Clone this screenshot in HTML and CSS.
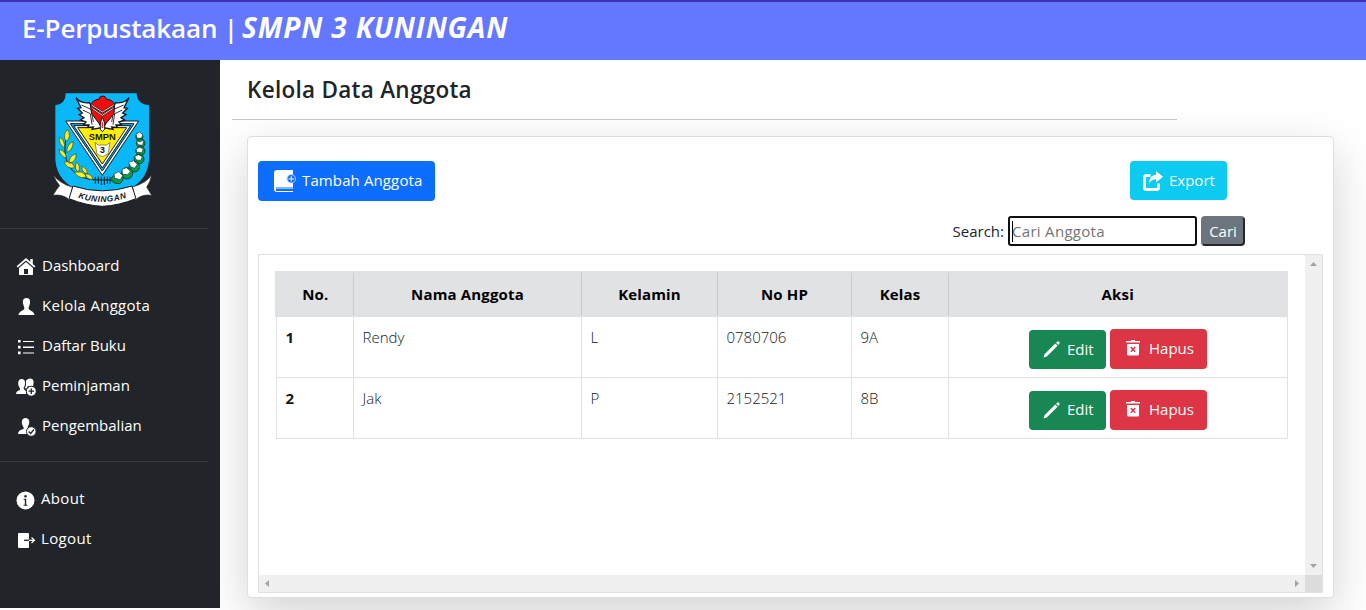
FILE: index.html
```html
<!DOCTYPE html>
<html lang="id">
<head>
<meta charset="utf-8">
<title>E-Perpustakaan</title>
<link rel="stylesheet" href="styles.css">
</head>
<body>
<header class="topbar"><span class="brand">E-Perpustakaan |</span><span class="school">SMPN 3 KUNINGAN</span></header>
<div class="layout">
  <aside class="sidebar">
    <svg class="logo" viewBox="0 0 375 405">
      <path d="M77 40H290Q290 72 327 76V240Q320 315 245 333Q185 350 125 333Q52 310 46 240V76Q78 72 77 40Z" fill="#08b8f8"/>
      <path d="M77 123H296L187 286Z" fill="#fff" stroke="#15151d" stroke-width="3"/>
      <path d="M91 131H282L187 273Z" fill="#08b8f8" stroke="#15151d" stroke-width="3"/>
      <path d="M101 137H272L187 264Z" fill="#fff" stroke="#15151d" stroke-width="3"/>
      <path d="M113 143H260L187 252Z" fill="#fff000" stroke="#15151d" stroke-width="3"/>
      <path d="M108 53Q119 71 148 68L163 93L184 143L156 148L160 141L143 142L147 135L130 135L138 126L121 120L132 113L117 104L127 99L113 85L123 83Z" fill="#fff" stroke="#15151d" stroke-width="4"/>
      <path d="M267 53Q256 71 227 68L212 93L191 143L219 148L215 141L232 142L228 135L245 135L237 126L254 120L243 113L258 104L248 99L262 85L252 83Z" fill="#fff" stroke="#15151d" stroke-width="4"/>
      <path d="M124 75L153 88L160 126M128 90L151 101L156 134M251 75L222 88L215 126M247 90L224 101L219 134" fill="none" stroke="#333" stroke-width="3"/>
      <path d="M178 57Q178 48 188 48Q198 48 198 57Q219 60 224 72L222 101L192 138H183L155 101L151 75Q160 59 178 57Z" fill="#f40b0b" stroke="#15151d" stroke-width="3"/>
      <path d="M156 76L187 96L220 76M158 86L187 106L218 86" fill="none" stroke="#222" stroke-width="6"/>
      <path d="M156 76L187 96L220 76M158 86L187 106L218 86" fill="none" stroke="#fff" stroke-width="2.5"/>
      <path d="M187 112L194 129V148L187 155L181 148V129Z" fill="#fff" stroke="#15151d" stroke-width="3"/>
      <path d="M187 126V144" stroke="#e22" stroke-width="4"/>
      <path d="M165 187L174 195H200L210 187L204 222L187 230L171 222Z" fill="#fff" stroke="#555" stroke-width="2"/>
      <text class="logo-name" x="187" y="181" text-anchor="middle">SMPN</text>
      <text class="logo-num" x="187" y="220" text-anchor="middle">3</text>
      <path d="M79 171Q62 249 112 284Q136 301 186 300H222" fill="none" stroke="#15151d" stroke-width="3"/>
      <path d="M166 290V311M175 290V311M184 290V315M193 290V315M202 290V311M210 290V311" stroke="#15151d" stroke-width="3"/>
      <g fill="#fff21c" stroke="#334b28" stroke-width="2">
        <path d="M82 148Q96 169 79 184Q66 168 82 148ZM58 171Q76 181 73 204Q56 193 58 171ZM99 184Q101 207 81 218Q79 195 99 184ZM57 208Q78 214 79 234Q60 229 57 208ZM108 221Q111 244 87 250Q86 229 108 221ZM72 246Q98 242 104 263Q83 269 72 246ZM109 247Q124 256 115 277Q102 267 109 247ZM126 258Q143 267 143 281Q124 280 126 258ZM103 277Q130 270 139 290Q119 300 103 277ZM136 281Q157 283 158 298Q140 300 136 281Z"/>
      </g>
      <g fill="#079b4c" stroke="#15151d" stroke-width="2">
        <circle cx="298" cy="170" r="11"/><circle cx="302" cy="190" r="13"/><circle cx="301" cy="213" r="14"/><circle cx="297" cy="237" r="15"/><circle cx="283" cy="260" r="16"/><circle cx="261" cy="280" r="17"/><path d="M211 299Q225 273 248 285Q253 304 239 311Q224 314 211 299Z"/>
      </g>
      <path d="M288 163L299 156L308 164L305 174L292 175ZM289 183L301 185L311 180L308 196L294 194ZM288 207L299 202L310 207L305 218L291 217ZM284 229L295 224L307 230L302 241L289 240ZM266 247L281 242L292 253L284 265L272 260ZM246 268L259 263L272 274L263 284L248 283ZM222 282L236 275L248 287L241 299L224 295Z" fill="#fff" stroke="#173c27" stroke-width="2"/>
      <path d="M40 285Q60 311 98 322L89 360Q68 341 39 346Q51 325 59 317Q48 304 40 285ZM334 286Q318 310 277 321L286 360Q306 341 335 346L320 321Q332 305 334 286Z" fill="#fff" stroke="#28282c" stroke-width="2"/>
      <path d="M99 318Q187 347 276 318L288 356Q235 377 187 379Q139 377 87 356Z" fill="#fff" stroke="#15151d" stroke-width="3"/>
      <path id="ribbon" d="M113 353Q187 379 264 352" fill="none"/>
      <text class="logo-ribbon"><textPath href="#ribbon" startOffset="1" textLength="148">KUNINGAN</textPath></text>
    </svg>
    <nav class="menu">
      <a class="item"><svg class="ico" viewBox="0 0 20 20"><path d="M10 1L0.6 9.2L1.8 10.5L10 3.5L18.2 10.5L19.4 9.2L16.8 7V2H14.3V4.8Z" fill="#fff"/><path d="M3 11L10 5L17 11V18H3ZM8 12V17H12V12Z" fill="#fff" fill-rule="evenodd"/></svg><span>Dashboard</span></a>
      <a class="item"><svg class="ico" viewBox="0 0 20 20"><path d="M10.5 1C14 1 14.5 4 13.8 7C13.5 9 12.6 9.8 12.6 11.5C12.6 13.7 18 13.6 18.5 18H2.5C3 13.6 8.4 13.7 8.4 11.5C8.4 9.8 7.5 9 7.2 7C6.5 4 7 1 10.5 1Z" fill="#fff"/></svg><span class="w-kelola">Kelola Anggota</span></a>
      <a class="item"><svg class="ico" viewBox="0 0 20 20"><path d="M2 3H4.6V5.6H2ZM2 8.8H4.6V11.4H2ZM2 14.6H4.6V17.2H2ZM7 4H18V5H7ZM7 9.5H18V10.9H7ZM7 15.5H18V16.5H7Z" fill="#fff"/></svg><span>Daftar Buku</span></a>
      <a class="item"><svg class="ico" viewBox="0 0 20 20"><path d="M5.5 2C9 2 9.8 5 8.6 9L7.5 11L8.5 13L10 14V17H0Q0 14 4 13L3.8 11C1.8 9 1 2 5.5 2ZM14 1.4C17.8 1.2 18.3 5 17 9H12L10 12L9 11L10 8V3.5Q12 1.5 14 1.4Z" fill="#fff"/><circle cx="15.3" cy="14.2" r="5" fill="#fff" stroke="#212529"/><path d="M15.3 11.5V17M12.5 14.2H18" stroke="#212529" stroke-width="1.3"/></svg><span>Peminjaman</span></a>
      <a class="item"><svg class="ico" viewBox="0 0 20 20"><path d="M9.5 1C13.5 1 14 5 12.7 8L11.5 10L12.5 12L13 17H2Q2 13 7.7 12L7.5 10C5 7 5 1 9.5 1Z" fill="#fff"/><circle cx="15.3" cy="14.5" r="4.8" fill="#fff" stroke="#212529"/><path d="M12.7 14.5L14.6 16.5L18 12.5" fill="none" stroke="#212529" stroke-width="1.3"/></svg><span>Pengembalian</span></a>
    </nav>
    <nav class="menu menu-foot">
      <a class="item"><svg class="ico" viewBox="0 0 20 20"><circle cx="9.5" cy="10.4" r="9" fill="#fff"/><circle cx="9.5" cy="6.2" r="1.2" fill="#212529"/><path d="M7.6 8.8H10.2V14.7H11.5V15.7H7.6V14.7H8.8V9.7H7.6Z" fill="#212529"/></svg><span class="w-foot">About</span></a>
      <a class="item"><svg class="ico" viewBox="0 0 20 20"><path d="M3 3H12Q13 3 13 4V17Q13 18 12 18H3Q2 18 2 17V4Q2 3 3 3Z" fill="#fff"/><path d="M8 10.3H13" stroke="#212529" stroke-width="1.3"/><path d="M13 10.3H18.5M15.5 7.5L18.4 10.3L15.5 13.1" fill="none" stroke="#fff" stroke-width="1.3"/></svg><span class="w-foot">Logout</span></a>
    </nav>
  </aside>
  <main class="main">
    <h1 class="title"><span>Kelola Data Anggota</span></h1>
    <section class="card">
      <div class="actions">
        <a class="btn blue"><svg class="book" viewBox="0 0 24 24"><path d="M4 1H20V18.5H3V21H20V23H4Q1 23 1 20V4Q1 1 4 1Z" fill="#fff"/><path d="M3 19H20V20H3Z" fill="#8bb7ff"/><path d="M3 20H20V22H3Z" fill="#0d6efd"/><circle cx="18.3" cy="9.8" r="4.2" fill="#0d6efd" stroke="#b5d0ff"/><path d="M18.3 7V12.6M15.5 9.8H21.1" stroke="#d4e4ff" stroke-width="1.2"/></svg><span class="w-add">Tambah Anggota</span></a>
        <a class="btn cyan"><svg class="exp" viewBox="0 0 20 20"><path d="M7.5 4.5H3.5Q1.5 4.5 1.5 6.5V16.5Q1.5 18.5 3.5 18.5H13Q15.5 18.5 15.5 16.5V12.5" fill="none" stroke="#fff" stroke-width="3"/><path d="M13 0L20 5.7L13 11.5V8.3Q9 8 6 12.5Q6 4.5 13 3.7Z" fill="#fff"/></svg><span>Export</span></a>
      </div>
      <div class="search"><label>Search:</label><div class="field"><i class="caret"></i><span>Cari Anggota</span></div><button class="find">Cari</button></div>
      <div class="scroller">
        <div class="pane">
          <table class="grid">
            <colgroup><col class="c1"><col class="c2"><col class="c3"><col class="c4"><col class="c5"><col class="c6"></colgroup>
            <thead><tr><th>No.</th><th>Nama Anggota</th><th>Kelamin</th><th>No HP</th><th>Kelas</th><th>Aksi</th></tr></thead>
            <tbody>
              <tr><td class="num">1</td><td>Rendy</td><td>L</td><td>0780706</td><td>9A</td><td><div class="row-actions">
                <a class="btn green"><svg class="pen" viewBox="0 0 18 18"><path d="M.5 17.5L1.6 14L13 2.6L15.4 5L4 16.4ZM13.8 1.8L15 .7Q16 0 17.2 .8Q18 2 17.3 3L16.2 4.2Z" fill="#fff"/></svg><span>Edit</span></a>
                <a class="btn red"><svg class="bin" viewBox="0 0 14 16"><path d="M0 1H5V0H9V1H14V2.5H0ZM1 4H13V14Q13 15.5 11.5 15.5H2.5Q1 15.5 1 14Z" fill="#fff"/><path d="M4.8 7L9.2 11.7M9.2 7L4.8 11.7" stroke="#dc3545" stroke-width="1.5"/></svg><span>Hapus</span></a></div></td></tr>
              <tr><td class="num">2</td><td>Jak</td><td>P</td><td>2152521</td><td>8B</td><td><div class="row-actions">
                <a class="btn green"><svg class="pen" viewBox="0 0 18 18"><path d="M.5 17.5L1.6 14L13 2.6L15.4 5L4 16.4ZM13.8 1.8L15 .7Q16 0 17.2 .8Q18 2 17.3 3L16.2 4.2Z" fill="#fff"/></svg><span>Edit</span></a>
                <a class="btn red"><svg class="bin" viewBox="0 0 14 16"><path d="M0 1H5V0H9V1H14V2.5H0ZM1 4H13V14Q13 15.5 11.5 15.5H2.5Q1 15.5 1 14Z" fill="#fff"/><path d="M4.8 7L9.2 11.7M9.2 7L4.8 11.7" stroke="#dc3545" stroke-width="1.5"/></svg><span>Hapus</span></a></div></td></tr>
            </tbody>
          </table>
        </div>
        <div class="vbar"><svg width="7" height="4" viewBox="0 0 7 4"><path d="M0 4L3.5 0L7 4Z"/></svg><svg width="7" height="4" viewBox="0 0 7 4"><path d="M0 0L3.5 4L7 0Z"/></svg></div>
        <div class="hbar"><svg width="4" height="7" viewBox="0 0 4 7"><path d="M4 0L0 3.5L4 7Z"/></svg><svg width="4" height="7" viewBox="0 0 4 7"><path d="M0 0L4 3.5L0 7Z"/></svg></div>
        <div class="corner"></div>
      </div>
    </section>
  </main>
</div>
</body>
</html>
```
FILE: styles.css
```css
* { box-sizing: border-box; }
body { margin: 0; height: 610px; overflow: hidden; background: #fff; color: #212529; font: 15px/24px "Open Sans", "Noto Sans", sans-serif; }
svg { display: block; flex: none; }
.topbar { height: 60px; padding: 6px 0 0 22px; display: flex; gap: 6px; background: #6478ff; border-top: 2px solid #4030b4; color: #fff; font-size: 26px; line-height: 40px; white-space: nowrap; }
.brand { font-weight: 600; letter-spacing: -.15px; }
.school { margin-left: -2px; font-size: 28px; line-height: 39px; font-weight: 700; font-style: italic; letter-spacing: .85px; }
.layout { display: flex; height: 550px; }
.sidebar { position: relative; z-index: 1; width: 220px; height: 548px; flex: none; background: #212529; padding: 20px 12px 0 0; color: #fff; }
.logo { width: 125px; height: 135px; margin-left: 40px; }
.logo-name { font: 700 28px "Liberation Sans", sans-serif; fill: #15151d; }
.logo-num { font: 700 28px "Liberation Sans", sans-serif; fill: #15151d; }
.logo-ribbon { font: italic 700 25px "Liberation Sans", sans-serif; fill: #15151d; }
.menu { margin-top: 13px; padding-top: 17px; border-top: 1px solid #373b3e; }
.item { display: flex; align-items: center; gap: 6px; height: 40px; padding-left: 16px; }
.item span, .btn span { padding-bottom: 2px; }
.w-kelola { letter-spacing: .28px; }
.w-add { letter-spacing: .12px; }
.w-foot { letter-spacing: .35px; }
.ico { width: 20px; height: 20px; margin-top: 2px; }
.menu-foot { margin-top: 15px; }
.menu-foot .item { gap: 5px; }
.main { flex: 1; min-width: 0; padding: 0 32px 0 12px; }
.title { margin: 0; width: 945px; height: 60px; padding: 12px 0 0 15px; border-bottom: 1px solid #c7c8c9; font-size: 22.5px; line-height: 36px; font-weight: 600; letter-spacing: .28px; }
.card { margin: 16px 0 0 15px; width: 1087px; height: 462px; padding: 24px 10px 0; background: #fff; border: 1px solid #dfdfdf; border-radius: 4px; box-shadow: 0 16px 48px rgba(0,0,0,.175); }
.actions { display: flex; justify-content: space-between; align-items: flex-start; padding-right: 96px; }
.btn { display: flex; align-items: center; color: #fff; border-radius: 4px; white-space: nowrap; }
.blue { width: 177px; height: 40px; padding-left: 15px; gap: 5px; background: #0d6efd; }
.book { width: 24px; height: 24px; }
.cyan { width: 97px; height: 39px; padding-left: 13px; gap: 6px; background: #0dcaf0; }
.exp { width: 20px; height: 20px; }
.search { display: flex; justify-content: flex-end; align-items: center; height: 30px; margin-top: 15px; padding-right: 78px; }
.field { position: relative; display: flex; align-items: center; width: 189px; height: 30px; margin: 0 4px; padding-left: 2px; border: 2px solid #101010; border-radius: 3px; color: #757575; letter-spacing: .3px; }
.caret { position: absolute; left: 2px; top: 3px; width: 1px; height: 21px; background: #000; }
.find { width: 44px; height: 30px; padding: 0; font: inherit; color: #fff; background: #6c757d; border: 2px solid; border-color: #6c757d #24282d #24282d #6c757d; border-radius: 4px; }
.scroller { display: grid; grid-template: 320px 17px / 1fr 17px; width: 1065px; height: 339px; margin-top: 8px; border: 1px solid #dee2e6; }
.pane { padding: 16px 0 0 16px; overflow: hidden; }
.vbar, .hbar { display: flex; justify-content: space-between; align-items: center; background: #f0f0f0; fill: #a3a3a3; }
.vbar { flex-direction: column; padding: 7px 0; }
.hbar { padding: 0 6px; }
.corner { background: #dcdcdc; }
.grid { width: 1013px; table-layout: fixed; border-collapse: collapse; }
.c1 { width: 77px; } .c2 { width: 228px; } .c3 { width: 136px; } .c4 { width: 134px; } .c5 { width: 97px; }
.grid th { height: 44px; padding: 0 0 0 1px; background: #e1e2e4; border: 1px solid #c9cbce; border-top: 2px solid #dee2e6; border-bottom: 2px solid #dee2e6; color: #000; font-weight: 700; letter-spacing: .15px; }
.grid th:first-child { border-left: 2px solid #dee2e6; }
.grid th:last-child { border-right: 2px solid #dee2e6; }
.grid td { height: 61px; padding: 8px 8px 0 9px; border: 1px solid #dee2e6; vertical-align: top; font-weight: 300; color: #14181c; }
.grid td.num { font-weight: 700; }
.row-actions { display: flex; justify-content: center; align-items: flex-end; gap: 4px; height: 44px; font-weight: 400; }
.green { width: 77px; height: 39px; padding-left: 14px; gap: 7px; background: #198754; }
.pen { width: 17px; height: 17px; }
.red { width: 97px; height: 40px; padding-left: 16px; gap: 9px; background: #dc3545; }
.bin { width: 14px; height: 16px; margin-top: -2px; }
```
